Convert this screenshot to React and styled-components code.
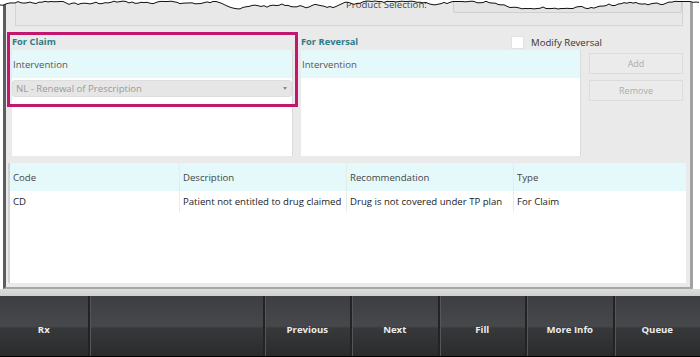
import React from 'react';
import styled, { createGlobalStyle } from 'styled-components';

const GlobalStyle = createGlobalStyle`
  html, body {
    margin: 0;
    padding: 0;
    background: #ffffff;
  }
  body {
    font-family: "Open Sans", "Noto Sans", Arial, sans-serif;
  }
`;

const columns = [
  { key: 'code', label: 'Code' },
  { key: 'description', label: 'Description' },
  { key: 'recommendation', label: 'Recommendation' },
  { key: 'type', label: 'Type' },
];

const rows = [
  {
    code: 'CD',
    description: 'Patient not entitled to drug claimed',
    recommendation: 'Drug is not covered under TP plan',
    type: 'For Claim',
  },
];

const toolbarButtons = [
  { label: 'Rx', span: 1 },
  { label: '', span: 2 },
  { label: 'Previous', span: 1 },
  { label: 'Next', span: 1 },
  { label: 'Fill', span: 1 },
  { label: 'More Info', span: 1 },
  { label: 'Queue', span: 1 },
];

// jagged "torn paper" edge along the top of the screenshot
const tornPath = () => {
  let seed = 7;
  const rand = () => {
    seed = (seed * 9301 + 49297) % 233280;
    return seed / 233280;
  };
  let y = 5;
  const pts = [];
  for (let x = 0; x <= 700; x += 3) {
    y += (rand() - 0.5) * 3.2;
    if (y < 1) y = 1.5;
    if (y > 9) y = 8.5;
    pts.push([x, y]);
  }
  const line = pts.map(([x, py], i) => `${i ? 'L' : 'M'}${x} ${py.toFixed(1)}`).join(' ');
  return { line, fill: `M0 0 ${line.replace(/^M/, 'L')} L700 0 Z` };
};

const App = () => {
  const torn = tornPath();

  return (
    <>
      <GlobalStyle />
      <Page>
        <Window>
          <TopPanel>
            <TopRow>
              <ProductLabel>Product Selection:</ProductLabel>
              <ProductInput />
            </TopRow>
          </TopPanel>

          <SectionGrid>
            <SectionTitle>For Claim</SectionTitle>
            <ReversalHeader>
              <SectionTitle>For Reversal</SectionTitle>
              <CheckWrap>
                <CheckBox />
                <CheckLabel>Modify Reversal</CheckLabel>
              </CheckWrap>
            </ReversalHeader>

            <ListPanel>
              <ListHeader>Intervention</ListHeader>
              <Combo>
                <span>NL - Renewal of Prescription</span>
                <ComboArrow />
              </Combo>
            </ListPanel>
            <ListPanel>
              <ListHeader>Intervention</ListHeader>
            </ListPanel>
            <ButtonColumn>
              <SideButton disabled>Add</SideButton>
              <SideButton disabled>Remove</SideButton>
            </ButtonColumn>

            <Highlight />
          </SectionGrid>

          <Table>
            <TableRow $header>
              {columns.map((c) => (
                <Cell key={c.key}>{c.label}</Cell>
              ))}
            </TableRow>
            {rows.map((r) => (
              <TableRow key={r.code}>
                {columns.map((c) => (
                  <Cell key={c.key}>{r[c.key]}</Cell>
                ))}
              </TableRow>
            ))}
          </Table>
        </Window>
        <BottomStrip />

        <Toolbar>
          {toolbarButtons.map((b, i) => (
            <ToolButton key={i} $span={b.span}>
              {b.label}
            </ToolButton>
          ))}
        </Toolbar>

        <Torn viewBox="0 0 700 14" width="700" height="14">
          <path d={torn.fill} fill="#ffffff" />
          <path d={torn.line} fill="none" stroke="#111" strokeWidth="1" />
        </Torn>
      </Page>
    </>
  );
};

const Page = styled.div`
  position: relative;
  width: 700px;
  height: 357px;
  overflow: hidden;
  background: #ffffff;
`;

const Window = styled.div`
  box-sizing: border-box;
  height: 289px;
  margin: 0 7px 0 3px;
  padding: 0 4px 0 2px;
  background: #eaeaeb;
  border-left: 3px solid #5e5e60;
  border-right: 3px solid #a2a2a4;
  border-bottom: 2px solid #a6a6a8;
  display: flex;
  flex-direction: column;
`;

const BottomStrip = styled.div`
  height: 7px;
  background: linear-gradient(#dcdcdd, #cfcfd0);
`;

const TopPanel = styled.div`
  box-sizing: border-box;
  height: 26px;
  margin-left: 7px;
  width: 668px;
  border: 1px solid #d4d4d6;
  border-top: none;
  background: #e8e8e9;
  overflow: hidden;
`;

const TopRow = styled.div`
  display: flex;
  align-items: center;
  gap: 18px;
  margin-top: -5px;
  padding-left: 330px;
`;

const ProductLabel = styled.span`
  font-size: 9.6px;
  color: #444;
  width: 92px;
`;

const ProductInput = styled.div`
  width: 236px;
  height: 16px;
  border: 1px solid #cfcfd1;
  border-radius: 2px;
  background: #e4e4e5;
`;

const SectionGrid = styled.div`
  position: relative;
  display: grid;
  grid-template-columns: 281px 280px 94px;
  grid-template-rows: 18px 106px;
  column-gap: 8px;
  margin-top: 6px;
  padding-left: 4px;
`;

const SectionTitle = styled.div`
  font-size: 9.3px;
  font-weight: 700;
  color: #2b7d8a;
  line-height: 18px;
  padding-top: 1px;
`;

const ReversalHeader = styled.div`
  grid-column: 2 / 4;
  display: grid;
  grid-template-columns: 210px 1fr;
`;

const CheckWrap = styled.div`
  display: flex;
  align-items: center;
  gap: 7px;
  padding-top: 1px;
`;

const CheckBox = styled.div`
  width: 13px;
  height: 13px;
  background: #ffffff;
  border: 1px solid #e2e2e2;
  box-sizing: border-box;
`;

const CheckLabel = styled.span`
  font-size: 9.6px;
  color: #333;
`;

const ListPanel = styled.div`
  background: #ffffff;
  border-right: 1px solid #dadadb;
  display: flex;
  flex-direction: column;
`;

const ListHeader = styled.div`
  height: 28px;
  background: #e6f9fa;
  display: flex;
  align-items: center;
  font-size: 9.6px;
  color: #555;
  padding-left: 1px;
`;

const Combo = styled.div`
  margin: 2px 0 0 0;
  height: 17px;
  border-radius: 3px;
  background: #e6e6e7;
  border: 1px solid #dedede;
  box-sizing: border-box;
  display: flex;
  align-items: center;
  justify-content: space-between;
  padding: 0 4px 0 3px;
  font-size: 9.6px;
  color: #9a9a9a;
`;

const ComboArrow = styled.span`
  width: 0;
  height: 0;
  border-left: 2.5px solid transparent;
  border-right: 2.5px solid transparent;
  border-top: 3px solid #8a8a8a;
`;

const ButtonColumn = styled.div`
  display: flex;
  flex-direction: column;
  gap: 6px;
  padding-top: 3px;
`;

const SideButton = styled.button`
  height: 21px;
  box-sizing: border-box;
  border: 1px solid #dcdcdd;
  background: #ebebec;
  color: #ababab;
  font-family: inherit;
  font-size: 9px;
  padding: 0;
`;

const Highlight = styled.div`
  position: absolute;
  left: -1px;
  top: 0;
  width: 291px;
  height: 75px;
  box-sizing: border-box;
  border: 3px solid #c2166f;
  pointer-events: none;
`;

const Table = styled.div`
  margin-top: 7px;
  width: 678px;
  height: 120px;
  background: #ffffff;
  border-left: 2px solid #d2d2d3;
  box-sizing: border-box;
`;

const TableRow = styled.div`
  display: grid;
  grid-template-columns: 170px 167px 167px 1fr;
  height: ${(p) => (p.$header ? '28px' : '21px')};
  background: ${(p) => (p.$header ? '#e6f9fa' : '#ffffff')};
  color: ${(p) => (p.$header ? '#444' : '#222')};
`;

const Cell = styled.div`
  display: flex;
  align-items: center;
  padding-left: 3px;
  font-size: 9.6px;
  border-right: 1px solid #e4ecee;
  white-space: nowrap;
  overflow: hidden;
  &:last-child {
    border-right: none;
  }
`;

const Toolbar = styled.div`
  display: grid;
  grid-template-columns: repeat(8, 1fr);
  height: 60px;
  border-bottom: 1px solid #000;
  background: #2c2d2f;
`;

const ToolButton = styled.div`
  grid-column: span ${(p) => p.$span};
  display: flex;
  align-items: center;
  justify-content: center;
  padding-top: 6px;
  box-sizing: border-box;
  background: linear-gradient(
    to bottom,
    #3d3e41 0%,
    #47484b 50%,
    #37383a 54%,
    #2a2b2d 100%
  );
  border-left: 2px solid #232325;
  box-shadow: inset 1px 0 0 #55565a;
  color: #ececec;
  font-size: 9.6px;
  font-weight: 700;
  &:first-child {
    border-left: none;
    box-shadow: none;
  }
`;

const Torn = styled.svg`
  position: absolute;
  top: 0;
  left: 0;
  display: block;
`;

export default App;
